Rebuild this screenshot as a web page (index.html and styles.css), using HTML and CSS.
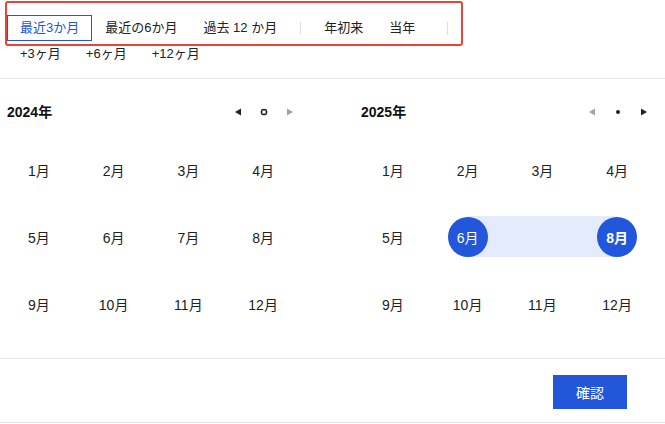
FILE: index.html
```html
<!DOCTYPE html>
<html lang="ja">
<head>
<meta charset="utf-8">
<title>Month range picker</title>
<link rel="stylesheet" href="styles.css">
</head>
<body>
<div class="picker">
  <div class="top">
    <div class="tabs">
      <span class="tab active">最近3か月</span>
      <span class="tab">最近の6か月</span>
      <span class="tab">過去 12 か月</span>
      <span class="sep"></span>
      <span class="tab">年初来</span>
      <span class="tab">当年</span>
      <span class="sep sep-end"></span>
    </div>
    <div class="quick">
      <span class="q">+3ヶ月</span>
      <span class="q">+6ヶ月</span>
      <span class="q">+12ヶ月</span>
    </div>
  </div>

  <div class="panels">
    <section class="panel panel-left">
      <header class="head">
        <span class="year">2024年</span>
        <div class="nav">
          <span class="nb dark"><svg width="8" height="8" viewBox="0 0 8 8"><polygon points="7,0.5 7,7.5 1,4" fill="currentColor"/></svg></span>
          <span class="nb dark"><svg width="8" height="8" viewBox="0 0 8 8"><circle cx="4" cy="4" r="2.6" fill="none" stroke="currentColor" stroke-width="1.5"/></svg></span>
          <span class="nb muted"><svg width="8" height="8" viewBox="0 0 8 8"><polygon points="1,0.5 1,7.5 7,4" fill="currentColor"/></svg></span>
        </div>
      </header>
      <div class="months">
        <span class="m">1月</span><span class="m">2月</span><span class="m">3月</span><span class="m">4月</span>
        <span class="m">5月</span><span class="m">6月</span><span class="m">7月</span><span class="m">8月</span>
        <span class="m">9月</span><span class="m">10月</span><span class="m">11月</span><span class="m">12月</span>
      </div>
    </section>

    <section class="panel panel-right">
      <header class="head">
        <span class="year">2025年</span>
        <div class="nav">
          <span class="nb muted"><svg width="8" height="8" viewBox="0 0 8 8"><polygon points="7,0.5 7,7.5 1,4" fill="currentColor"/></svg></span>
          <span class="nb dark"><svg width="8" height="8" viewBox="0 0 8 8"><circle cx="4" cy="4" r="2" fill="currentColor"/></svg></span>
          <span class="nb dark"><svg width="8" height="8" viewBox="0 0 8 8"><polygon points="1,0.5 1,7.5 7,4" fill="currentColor"/></svg></span>
        </div>
      </header>
      <div class="months">
        <span class="m">1月</span><span class="m">2月</span><span class="m">3月</span><span class="m">4月</span>
        <span class="m">5月</span>
        <span class="m range-start"><span class="dot">6月</span></span>
        <span class="m in-range">7月</span>
        <span class="m range-end"><span class="dot bold">8月</span></span>
        <span class="m">9月</span><span class="m">10月</span><span class="m">11月</span><span class="m">12月</span>
      </div>
    </section>
  </div>

  <div class="foot">
    <button class="ok">確認</button>
  </div>

  <div class="annot"></div>
</div>
</body>
</html>
```

FILE: styles.css
```css
* { box-sizing: border-box; }

html, body {
  margin: 0;
  padding: 0;
  background: #fff;
}

body {
  font-family: "Liberation Sans", Arial, "Noto Sans CJK JP", sans-serif;
  color: #222;
  width: 665px;
  height: 424px;
  overflow: hidden;
}

.picker {
  position: relative;
  width: 665px;
}

/* ---------- top shortcuts ---------- */
.top {
  height: 79px;
  padding-top: 15px;
  border-bottom: 1px solid #e6e4ee;
}

.tabs {
  display: flex;
  align-items: center;
  padding-left: 7px;
  height: 26px;
}

.tab {
  height: 26px;
  line-height: 24px;
  padding: 0 12px;
  font-size: 13px;
  border: 1px solid transparent;
  white-space: nowrap;
  color: #222;
}

.tab.active {
  border-color: #2257dc;
  color: #2257dc;
}

.sep {
  width: 1px;
  height: 13px;
  background: #dedede;
  margin: 1px 10px 0 10px;
}

.sep-end {
  margin-left: 19px;
}

.quick {
  display: flex;
  margin-top: 5px;
  padding-left: 8px;
  gap: 1px;
  height: 16px;
}

.q {
  font-size: 13px;
  line-height: 16px;
  padding: 0 12px;
  white-space: nowrap;
}

/* ---------- panels ---------- */
.panels {
  display: flex;
  height: 280px;
  border-bottom: 1px solid #e6e4ee;
}

.panel {
  padding-top: 20px;
}

.panel-left { width: 354px; }
.panel-right { width: 311px; }

.head {
  width: 303px;
  height: 26px;
  padding-left: 7px;
  display: flex;
  align-items: center;
  justify-content: space-between;
}

.year {
  font-size: 14px;
  font-weight: bold;
  line-height: 26px;
  color: #111;
}

.nav {
  display: flex;
  align-items: center;
}

.nb {
  width: 26px;
  height: 26px;
  display: flex;
  align-items: center;
  justify-content: center;
}

.nb svg { display: block; }

.nb.dark { color: #222; }
.nb.muted { color: #a3a3a3; }

.months {
  margin-top: 11px;
  margin-left: 1.5px;
  display: grid;
  grid-template-columns: repeat(4, 74.75px);
  grid-auto-rows: 67px;
}

.m {
  position: relative;
  display: flex;
  align-items: center;
  justify-content: center;
  font-size: 14px;
  color: #222;
}

.in-range::before,
.range-start::before,
.range-end::before {
  content: "";
  position: absolute;
  top: 13px;
  height: 41px;
  background: #e3ebfd;
  z-index: 0;
}

.in-range::before { left: 0; right: 0; }
.range-start::before { left: 50%; right: 0; }
.range-end::before { left: 0; right: 50%; }

.in-range { z-index: 0; }

.dot {
  position: relative;
  z-index: 1;
  width: 40px;
  height: 40px;
  border-radius: 50%;
  background: #2257dc;
  color: #fff;
  display: flex;
  align-items: center;
  justify-content: center;
  font-size: 14px;
}

.dot.bold { font-weight: bold; }

/* ---------- footer ---------- */
.foot {
  height: 64px;
  border-bottom: 1px solid #e2e2e8;
  display: flex;
  justify-content: flex-end;
  align-items: flex-start;
  padding-top: 16px;
  padding-right: 38px;
}

.ok {
  width: 74px;
  height: 34px;
  border: none;
  background: #2257dc;
  color: #fff;
  font-family: "Liberation Sans", Arial, "Noto Sans CJK JP", sans-serif;
  font-size: 14px;
  padding: 0;
  cursor: pointer;
}

/* ---------- annotation overlay ---------- */
.annot {
  position: absolute;
  left: 5px;
  top: 1px;
  width: 458px;
  height: 45px;
  border: 2.5px solid #ea4438;
  border-radius: 3px;
  pointer-events: none;
}
```
